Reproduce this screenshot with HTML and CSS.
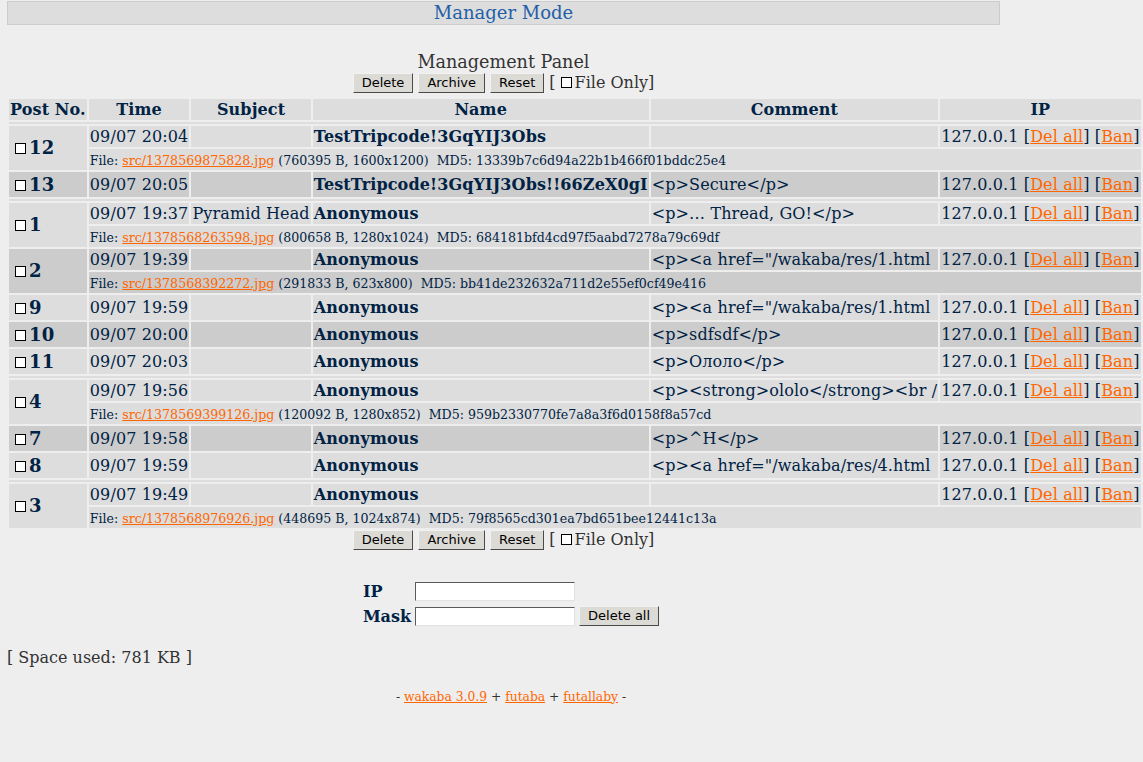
FILE: index.html
```html
<!DOCTYPE html>
<html>
<head>
<meta charset="utf-8">
<title>Manager Mode</title>
<link rel="stylesheet" href="styles.css">
</head>
<body>
<div class="mode-bar">Manager Mode</div>
<div class="panel">
  <div class="panel-title">Management Panel</div>
  <div class="actions">
    <button>Delete</button><button>Archive</button><button>Reset</button>
    <span class="fileonly">[<input type="checkbox" class="cb">File Only]</span>
  </div>
</div>
<table class="posts">
  <thead>
    <tr><th>Post No.</th><th>Time</th><th>Subject</th><th>Name</th><th>Comment</th><th>IP</th></tr>
  </thead>
  <tbody>
    <tr class="sep"><td colspan="6"></td></tr>
    <tr class="row1">
      <td class="no" rowspan="2"><input type="checkbox" class="cb"><b>12</b>&nbsp;&nbsp;</td>
      <td>09/07 20:04</td><td></td><td class="name">TestTripcode!3GqYIJ3Obs</td><td></td>
      <td>127.0.0.1 [<a href="#">Del all</a>] [<a href="#">Ban</a>]</td>
    </tr>
    <tr class="row1"><td colspan="5"><small>File: <a href="#">src/1378569875828.jpg</a> (760395 B, 1600x1200)&nbsp; MD5: 13339b7c6d94a22b1b466f01bddc25e4</small></td></tr>
    <tr class="row2">
      <td class="no"><input type="checkbox" class="cb"><b>13</b>&nbsp;&nbsp;</td>
      <td>09/07 20:05</td><td></td><td class="name">TestTripcode!3GqYIJ3Obs!!66ZeX0gI</td><td>&lt;p&gt;Secure&lt;/p&gt;</td>
      <td>127.0.0.1 [<a href="#">Del all</a>] [<a href="#">Ban</a>]</td>
    </tr>

    <tr class="sep"><td colspan="6"></td></tr>
    <tr class="row1">
      <td class="no" rowspan="2"><input type="checkbox" class="cb"><b>1</b>&nbsp;&nbsp;</td>
      <td>09/07 19:37</td><td>Pyramid Head</td><td class="name">Anonymous</td><td>&lt;p&gt;… Thread, GO!&lt;/p&gt;</td>
      <td>127.0.0.1 [<a href="#">Del all</a>] [<a href="#">Ban</a>]</td>
    </tr>
    <tr class="row1"><td colspan="5"><small>File: <a href="#">src/1378568263598.jpg</a> (800658 B, 1280x1024)&nbsp; MD5: 684181bfd4cd97f5aabd7278a79c69df</small></td></tr>
    <tr class="row2">
      <td class="no" rowspan="2"><input type="checkbox" class="cb"><b>2</b>&nbsp;&nbsp;</td>
      <td>09/07 19:39</td><td></td><td class="name">Anonymous</td><td>&lt;p&gt;&lt;a href="/wakaba/res/1.html</td>
      <td>127.0.0.1 [<a href="#">Del all</a>] [<a href="#">Ban</a>]</td>
    </tr>
    <tr class="row2"><td colspan="5"><small>File: <a href="#">src/1378568392272.jpg</a> (291833 B, 623x800)&nbsp; MD5: bb41de232632a711d2e55ef0cf49e416</small></td></tr>
    <tr class="row1">
      <td class="no"><input type="checkbox" class="cb"><b>9</b>&nbsp;&nbsp;</td>
      <td>09/07 19:59</td><td></td><td class="name">Anonymous</td><td>&lt;p&gt;&lt;a href="/wakaba/res/1.html</td>
      <td>127.0.0.1 [<a href="#">Del all</a>] [<a href="#">Ban</a>]</td>
    </tr>
    <tr class="row2">
      <td class="no"><input type="checkbox" class="cb"><b>10</b>&nbsp;&nbsp;</td>
      <td>09/07 20:00</td><td></td><td class="name">Anonymous</td><td>&lt;p&gt;sdfsdf&lt;/p&gt;</td>
      <td>127.0.0.1 [<a href="#">Del all</a>] [<a href="#">Ban</a>]</td>
    </tr>
    <tr class="row1">
      <td class="no"><input type="checkbox" class="cb"><b>11</b>&nbsp;&nbsp;</td>
      <td>09/07 20:03</td><td></td><td class="name">Anonymous</td><td>&lt;p&gt;Ололо&lt;/p&gt;</td>
      <td>127.0.0.1 [<a href="#">Del all</a>] [<a href="#">Ban</a>]</td>
    </tr>

    <tr class="sep"><td colspan="6"></td></tr>
    <tr class="row1">
      <td class="no" rowspan="2"><input type="checkbox" class="cb"><b>4</b>&nbsp;&nbsp;</td>
      <td>09/07 19:56</td><td></td><td class="name">Anonymous</td><td>&lt;p&gt;&lt;strong&gt;ololo&lt;/strong&gt;&lt;br /</td>
      <td>127.0.0.1 [<a href="#">Del all</a>] [<a href="#">Ban</a>]</td>
    </tr>
    <tr class="row1"><td colspan="5"><small>File: <a href="#">src/1378569399126.jpg</a> (120092 B, 1280x852)&nbsp; MD5: 959b2330770fe7a8a3f6d0158f8a57cd</small></td></tr>
    <tr class="row2">
      <td class="no"><input type="checkbox" class="cb"><b>7</b>&nbsp;&nbsp;</td>
      <td>09/07 19:58</td><td></td><td class="name">Anonymous</td><td>&lt;p&gt;^H&lt;/p&gt;</td>
      <td>127.0.0.1 [<a href="#">Del all</a>] [<a href="#">Ban</a>]</td>
    </tr>
    <tr class="row1">
      <td class="no"><input type="checkbox" class="cb"><b>8</b>&nbsp;&nbsp;</td>
      <td>09/07 19:59</td><td></td><td class="name">Anonymous</td><td>&lt;p&gt;&lt;a href="/wakaba/res/4.html</td>
      <td>127.0.0.1 [<a href="#">Del all</a>] [<a href="#">Ban</a>]</td>
    </tr>

    <tr class="sep"><td colspan="6"></td></tr>
    <tr class="row1">
      <td class="no" rowspan="2"><input type="checkbox" class="cb"><b>3</b>&nbsp;&nbsp;</td>
      <td>09/07 19:49</td><td></td><td class="name">Anonymous</td><td></td>
      <td>127.0.0.1 [<a href="#">Del all</a>] [<a href="#">Ban</a>]</td>
    </tr>
    <tr class="row1"><td colspan="5"><small>File: <a href="#">src/1378568976926.jpg</a> (448695 B, 1024x874)&nbsp; MD5: 79f8565cd301ea7bd651bee12441c13a</small></td></tr>
  </tbody>
</table>
<div class="panel">
  <div class="actions">
    <button>Delete</button><button>Archive</button><button>Reset</button>
    <span class="fileonly">[<input type="checkbox" class="cb">File Only]</span>
  </div>
</div>
<div class="lower">
  <table class="ipform">
    <tr><td class="label">IP</td><td><input type="text" class="field"></td><td></td></tr>
    <tr><td class="label">Mask</td><td><input type="text" class="field"></td><td><button class="delall">Delete all</button></td></tr>
  </table>
</div>
<div class="space">[ Space used: 781 KB ]</div>
<div class="lower">
  <div class="footer">- <a href="#">wakaba 3.0.9</a> + <a href="#">futaba</a> + <a href="#">futallaby</a> -</div>
</div>
</body>
</html>
```

FILE: styles.css
```css
html {
  background: #eeeeee;
}
body {
  margin: 1px 0 0 7px;
  background: #eeeeee;
  color: #002244;
  font-family: "DejaVu Serif", serif;
  font-size: 16px;
}
a {
  color: #ff6600;
  text-decoration: underline;
}

.mode-bar {
  width: 991px;
  border: 1px solid #cccccc;
  background: #dddddd;
  color: #2260a8;
  text-align: center;
  font-size: 18px;
  line-height: 22px;
}

.panel {
  width: 993px;
  text-align: center;
}
.panel-title {
  margin-top: 27px;
  font-size: 17.6px;
  line-height: 20.5px;
  color: #333333;
}
.actions {
  display: flex;
  justify-content: center;
  align-items: flex-start;
  gap: 5px;
  height: 24px;
  padding-top: 0;
  box-sizing: border-box;
}
.fileonly {
  color: #333333;
  font-size: 16px;
  line-height: 19px;
}

button {
  font-family: "DejaVu Sans", sans-serif;
  font-size: 13px;
  line-height: 15px;
  color: #000000;
  background: #dcdad5;
  border: 1px solid;
  border-color: #f2f2f2 #4a4a4a #4a4a4a #f2f2f2;
  border-radius: 0;
  padding: 1px 8px 2px;
  margin: 0;
}

.cb {
  -webkit-appearance: none;
  appearance: none;
  box-sizing: border-box;
  width: 11px;
  height: 11px;
  border: 1px solid #000000;
  background: #ffffff;
  margin: 0 3px 0 5px;
  padding: 0;
  vertical-align: baseline;
}

.posts {
  border-spacing: 2px;
  white-space: nowrap;
  letter-spacing: 0.12px;
}
.posts th {
  background: #dddddd;
  padding: 1px;
  font-weight: bold;
  font-size: 16px;
}
.posts td {
  padding: 1px;
}
.posts .sep td {
  background: #dddddd;
}
.posts .row1 td {
  background: #dddddd;
}
.posts .row2 td {
  background: #cccccc;
}
.posts td.no {
  font-size: 18px;
  line-height: 23px;
}
.posts td.name {
  font-weight: bold;
}
.posts small {
  font-size: 12.6px;
  letter-spacing: 0;
}

.lower {
  width: 1008px;
}
.ipform {
  margin: 24px auto 0;
  border-spacing: 2px;
}
.ipform td {
  padding: 1px;
}
.ipform td.label {
  font-weight: bold;
  font-size: 16px;
}
.field {
  display: block;
  box-sizing: border-box;
  width: 160px;
  height: 19px;
  margin: 1px 0;
  padding: 0;
  background: #ffffff;
  border: 1px solid;
  border-color: #5a5a5a #e2e2e2 #e2e2e2 #5a5a5a;
}
.delall {
  display: block;
}

.space {
  margin-top: 18px;
  color: #333333;
  font-size: 16px;
}
.footer {
  margin-top: 23px;
  text-align: center;
  font-size: 12.3px;
  color: #333333;
}
```
